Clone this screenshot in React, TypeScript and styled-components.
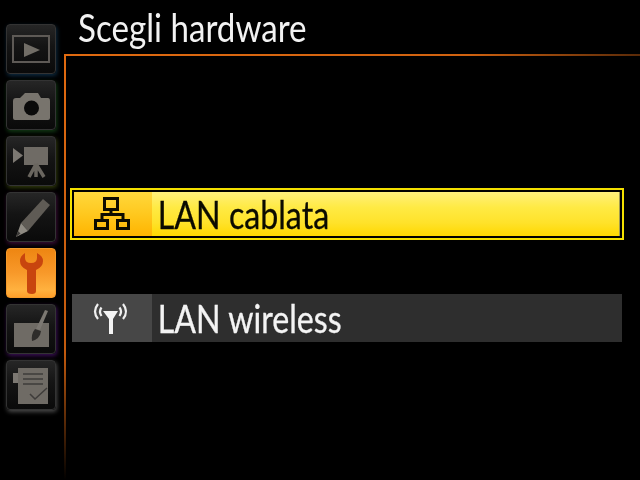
import React from 'react';
import styled, { createGlobalStyle } from 'styled-components';

const GlobalStyle = createGlobalStyle`
  html, body { margin: 0; padding: 0; background: #000; }
  #root { width: 640px; height: 480px; overflow: hidden; }
`;

const Screen = styled.div`
  display: flex;
  width: 640px;
  height: 480px;
  background: #000;
  font-family: 'Lato', 'Open Sans', sans-serif;
`;

const Sidebar = styled.nav`
  display: flex;
  flex-direction: column;
  gap: 6px;
  width: 64px;
  flex: none;
  box-sizing: border-box;
  padding: 24px 0 0 6px;
`;

const Tab = styled.div<{ $glow: string; $active?: boolean }>`
  width: 50px;
  height: 50px;
  box-sizing: border-box;
  border-radius: 4px;
  border: 1px solid ${p => (p.$active ? '#f59a2a' : '#333')};
  background: ${p =>
    p.$active
      ? 'linear-gradient(180deg, #ee8612 0%, #f8992a 50%, #ffb13f 85%, #ff9f2a 100%)'
      : 'linear-gradient(180deg, #262626 0%, #141414 45%, #0a0a0a 100%)'};
  box-shadow: ${p => (p.$active ? 'none' : `1px 2px 4px ${p.$glow}`)};

  svg { display: block; width: 48px; height: 48px; filter: blur(0.4px); }
`;

const Main = styled.main`
  flex: 1;
  display: flex;
  flex-direction: column;
`;

const Header = styled.header`
  height: 54px;
  flex: none;
  box-sizing: border-box;
  padding-left: 14px;
`;

const Title = styled.h1`
  margin: 0;
  font-weight: 400;
  font-size: 39px;
  line-height: 55px;
  color: #f2f2f2;
  white-space: nowrap;
  transform: scaleX(0.85);
  transform-origin: left center;
`;

const Panel = styled.section`
  position: relative;
  flex: 1;
  display: flex;
  flex-direction: column;
  padding-top: 134px;

  &::before {
    content: '';
    position: absolute;
    left: 0;
    top: 0;
    right: 0;
    height: 2px;
    background: linear-gradient(90deg, #e06a10 0%, #d06210 70%, #5a2a08 100%);
  }

  &::after {
    content: '';
    position: absolute;
    left: 0;
    top: 0;
    bottom: 0;
    width: 2px;
    background: linear-gradient(180deg, #e06a10 0%, #c25a0e 70%, #000 100%);
  }
`;

const SelectedFrame = styled.div`
  width: 554px;
  height: 52px;
  margin-left: 6px;
  box-sizing: border-box;
  border: 2px solid #f4e000;
  padding: 2px;
  background: #000;
`;

const Row = styled.div<{ $selected?: boolean }>`
  display: flex;
  align-items: center;
  height: ${p => (p.$selected ? '44px' : '48px')};
  box-sizing: border-box;
  color: ${p => (p.$selected ? '#0b0b00' : '#f4f4f4')};
  background: ${p =>
    p.$selected
      ? 'linear-gradient(180deg, #fff07c 0%, #ffea44 35%, #ffe22a 70%, #ffd800 100%)'
      : '#2e2e2e'};
  border-right: ${p => (p.$selected ? '1px solid #a09a50' : 'none')};
`;

const WirelessWrap = styled.div`
  width: 550px;
  margin: 54px 0 0 8px;
`;

const IconCell = styled.div<{ $selected?: boolean }>`
  width: ${p => (p.$selected ? '78px' : '80px')};
  height: 100%;
  flex: none;
  display: flex;
  align-items: center;
  justify-content: center;
  background: ${p =>
    p.$selected ? 'linear-gradient(180deg, #ffd83c 0%, #ffc81e 50%, #ffb400 100%)' : '#474747'};

  svg { display: block; }
`;

const Label = styled.span`
  display: inline-block;
  padding-left: 7px;
  font-size: 39px;
  line-height: 1;
  white-space: nowrap;
  transform: scaleX(0.825);
  transform-origin: left center;
  -webkit-text-stroke: 0.3px currentColor;
`;

const Gray = '#6f6b65';

const PlayIcon = () => (
  <svg viewBox="0 0 48 48">
    <rect x="6" y="11" width="36" height="26" fill="none" stroke="#5e5a56" strokeWidth="2" />
    <path d="M17 18 L33 25 L17 32 Z" fill="#716d66" />
  </svg>
);

const CameraIcon = () => (
  <svg viewBox="0 0 48 48">
    <path d="M6 20 Q6 17 9 17 L13 17 L15 15 L18 12 L31 12 L34 17 L41 17 Q43 17 43 20 L43 37 Q43 39 41 39 L8 39 Q6 39 6 37 Z" fill="#78746d" />
    <circle cx="24.500" cy="27" r="7.500" fill="#0a0a0a" />
  </svg>
);

const MovieIcon = () => (
  <svg viewBox="0 0 48 48">
    <path d="M6 11 L16 18.500 L6 26 Z" fill="#7c7872" />
    <rect x="17" y="10" width="24" height="18" fill={Gray} />
    <path d="M29 27 L22 40 M29 27 L29 40 M29 27 L37 40" stroke="#6a665f" strokeWidth="3.500" fill="none" />
  </svg>
);

const PencilIcon = () => (
  <svg viewBox="0 0 48 48">
    <path d="M14 30 L36 6 L43 12 L21 38 Z" fill="#5f5b55" />
    <path d="M14 30 L21 38 L9 44 Z" fill="#8e8a82" />
    <path d="M11 38 L13.500 40.500 L9 44 Z" fill="#3c3a38" />
  </svg>
);

const WrenchIcon = () => (
  <svg viewBox="0 0 48 48">
    <path
      d="M18 4 L18 9 Q18 14 24 14 Q30 14 30 9 L30 4 Q36 7 36 12 Q36 18 29 21 L29 42 Q29 45 25 45 Q20 45 20 42 L20 21 Q13 18 13 12 Q13 7 18 4 Z"
      fill="#c8450e"
    />
  </svg>
);

const RetouchIcon = () => (
  <svg viewBox="0 0 48 48">
    <rect x="7" y="18" width="35" height="24" fill={Gray} />
    <path d="M38 5 L41 6 L33 25 L29 24 Z" fill="#7c7872" />
    <path d="M28 24 L34 26 Q33 34 25 36 Q24 29 28 24 Z" fill="#2e2c2a" />
  </svg>
);

const MyMenuIcon = () => (
  <svg viewBox="0 0 48 48">
    <rect x="6" y="12" width="7" height="10" fill="#7c7872" />
    <rect x="11" y="7" width="30" height="36" fill={Gray} />
    <path d="M16 13 H36 M16 18 H36 M16 23 H36" stroke="#3e3c3a" strokeWidth="1.500" />
    <path d="M23 33 L28 38 L40 27" stroke="#3e3c3a" strokeWidth="1.500" fill="none" />
  </svg>
);

const WiredIcon = () => (
  <svg width="38" height="36" viewBox="0 0 38 36">
    <g fill="none" stroke="#0e0c00" strokeWidth="3">
      <rect x="10.500" y="2.500" width="13" height="11" />
      <rect x="1.500" y="24.500" width="12" height="8" />
      <rect x="23.500" y="24.500" width="11" height="8" />
      <path d="M17 14 V18.500 M8 24 V18.500 H29 V24" />
    </g>
  </svg>
);

const WirelessIcon = () => (
  <svg width="40" height="34" viewBox="0 0 40 34">
    <path d="M11 10 H26 L21 18 V33 H17 V18 Z" fill="#f4f4f4" />
    <g fill="none" stroke="#f0f0f0" strokeWidth="2.200">
      <path d="M6 3 Q0 10.500 6 18" />
      <path d="M9.500 6.500 Q6.500 10.500 9.500 15" />
      <path d="M31 3 Q37 10.500 31 18" />
      <path d="M27.500 6.500 Q30.500 10.500 27.500 15" />
    </g>
  </svg>
);

const tabs = [
  { glow: '#0d2a40', icon: <PlayIcon /> },
  { glow: '#123a14', icon: <CameraIcon /> },
  { glow: '#303a0c', icon: <MovieIcon /> },
  { glow: '#3a0d36', icon: <PencilIcon /> },
  { glow: '#000', icon: <WrenchIcon />, active: true },
  { glow: '#3a0f55', icon: <RetouchIcon /> },
  { glow: '#4a4a4a', icon: <MyMenuIcon /> },
];

export default function App() {
  return (
    <Screen>
      <GlobalStyle />
      <Sidebar>
        {tabs.map((t, i) => (
          <Tab key={i} $glow={t.glow} $active={t.active}>
            {t.icon}
          </Tab>
        ))}
      </Sidebar>
      <Main>
        <Header>
          <Title>Scegli hardware</Title>
        </Header>
        <Panel>
          <SelectedFrame>
            <Row $selected>
              <IconCell $selected>
                <WiredIcon />
              </IconCell>
              <Label>LAN cablata</Label>
            </Row>
          </SelectedFrame>
          <WirelessWrap>
            <Row>
              <IconCell>
                <WirelessIcon />
              </IconCell>
              <Label>LAN wireless</Label>
            </Row>
          </WirelessWrap>
        </Panel>
      </Main>
    </Screen>
  );
}
